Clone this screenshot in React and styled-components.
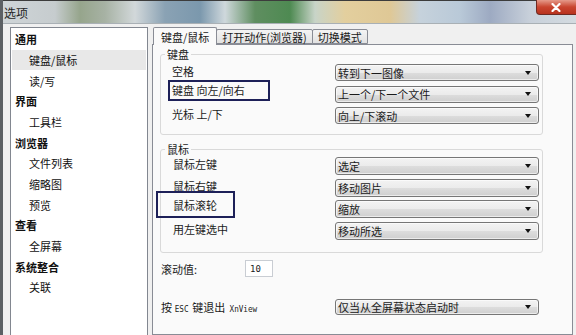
import styled, { createGlobalStyle } from "styled-components";

const Global = createGlobalStyle`
  html, body {
    margin: 0;
    padding: 0;
    background: #f0f0f0;
    overflow: hidden;
  }
  * { box-sizing: border-box; }
`;

const FONT = `"Noto Sans CJK SC", "Noto Sans", sans-serif`;

const Window = styled.div`
  width: 576px;
  height: 335px;
  display: flex;
  flex-direction: column;
  border-left: 3px solid #5c6064;
  background: #f0f0f0;
  font-family: ${FONT};
  font-size: 11px;
  color: #1a1a1a;
  overflow: hidden;
`;

const TitleBar = styled.div`
  height: 24px;
  flex-shrink: 0;
  display: flex;
  align-items: flex-start;
  margin-left: -3px;
  border-top: 1px solid #3c3c3c;
  border-bottom: 1px solid #a9b0b5;
  background: linear-gradient(
    90deg,
    #cfd5d8 0px,
    #c6ccce 55px,
    #96a58c 80px,
    #a7b2a4 105px,
    #d2d8da 135px,
    #8aa2b4 165px,
    #7b98ad 200px,
    #cfd8dc 225px,
    #5f8e60 255px,
    #4e8a52 290px,
    #c8d4c8 315px,
    #e3cf9e 345px,
    #dfc896 390px,
    #c6d2dc 420px,
    #b9c9d8 460px,
    #9daac2 490px,
    #c8d0da 530px,
    #d4dbe0 576px
  );
`;

const Title = styled.span`
  padding: 3px 0 0 4px;
  font-size: 12px;
  color: #262626;
`;

const CloseButton = styled.div`
  margin-left: auto;
  margin-top: -1px;
  margin-right: -8px;
  width: 48px;
  height: 15px;
  border: 1px solid #6e2a22;
  border-top: none;
  border-radius: 0 0 4px 4px;
  background: linear-gradient(#e59a8a, #c9452f 50%, #b8321e);
  display: flex;
  justify-content: center;
  align-items: center;
  padding-right: 8px;
`;

const Body = styled.div`
  flex: 1;
  display: flex;
  gap: 4px;
  padding: 3px 3px 0 7px;
  min-height: 0;
`;

const Tree = styled.div`
  width: 138px;
  flex-shrink: 0;
  height: 320px;
  background: #fff;
  border: 1px solid #828790;
  padding: 1px 1px 0;
`;

const TreeItem = styled.div`
  height: 20.67px;
  display: flex;
  align-items: center;
  padding-left: ${(p) => (p.$child ? 17 : 3)}px;
  font-weight: ${(p) => (p.$child ? 400 : 700)};
  background: ${(p) => (p.$selected ? "#e8e8e8" : "transparent")};
  color: #111;
`;

const TabArea = styled.div`
  flex: 1;
  display: flex;
  flex-direction: column;
`;

const TabStrip = styled.div`
  height: 17px;
  display: flex;
  align-items: flex-end;
  padding-left: 1px;
`;

const Tab = styled.div`
  height: ${(p) => (p.$active ? 18 : 15)}px;
  padding: 0 ${(p) => (p.$active ? 7 : 5)}px;
  margin-bottom: ${(p) => (p.$active ? -1 : 0)}px;
  margin-left: ${(p) => (p.$active ? 0 : -1)}px;
  display: flex;
  align-items: center;
  border: 1px solid #898c95;
  border-bottom: ${(p) => (p.$active ? "none" : "1px solid #898c95")};
  border-radius: 2px 2px 0 0;
  background: ${(p) =>
    p.$active ? "#fafafa" : "linear-gradient(#f4f4f4, #e2e2e2)"};
  position: relative;
  z-index: ${(p) => (p.$active ? 1 : 0)};
`;

const Panel = styled.div`
  flex: 1;
  border: 1px solid #898c95;
  background: #fafafa;
  padding: 3px 0 0 7px;
  display: flex;
  flex-direction: column;
`;

const Group = styled.fieldset`
  width: 383px;
  margin: ${(p) => p.$margin || "0"};
  border: 1px solid #d9d9d9;
  border-radius: 3px;
  padding: ${(p) => p.$padding};
  display: grid;
  grid-template-columns: 1fr 204px;
  row-gap: ${(p) => p.$gap}px;
  align-items: center;
`;

const Legend = styled.legend`
  padding: 0 2px;
  margin-left: 4px;
  font-size: 11px;
  line-height: 13px;
`;

/* label cell; $box draws the dark annotation rectangle over it */
const Label = styled.div`
  position: relative;
  height: ${(p) => p.$h || 17}px;
  display: flex;
  align-items: center;
  padding-left: ${(p) => p.$indent}px;
  padding-bottom: ${(p) => (p.$box ? 8 : 4)}px;
  white-space: pre;

  ${(p) =>
    p.$box &&
    `
    &::before {
      content: "";
      position: absolute;
      left: ${p.$box.x}px;
      top: ${p.$box.y}px;
      width: ${p.$box.w}px;
      height: ${p.$box.h}px;
      border: 2px solid #1d2058;
      box-sizing: border-box;
      pointer-events: none;
    }
  `}
`;

const Select = styled.div`
  width: ${(p) => p.$w || 204}px;
  height: ${(p) => p.$h || 17}px;
  margin-left: ${(p) => (p.$push ? "auto" : "0")};
  margin-right: ${(p) => p.$right || 0}px;
  border: 1px solid #767676;
  border-radius: 3px;
  background: linear-gradient(#f3f3f3 0%, #ebebeb 50%, #dddddd 51%, #cfcfcf 100%);
  display: flex;
  align-items: center;
  justify-content: space-between;
  padding: 0 7px 0 2px;
  box-shadow: inset 0 0 0 1px rgba(255, 255, 255, 0.6);
`;

const Arrow = styled.span`
  width: 0;
  height: 0;
  border-left: 3.5px solid transparent;
  border-right: 3.5px solid transparent;
  border-top: 4px solid #111;
`;

const FieldRow = styled.div`
  display: flex;
  align-items: center;
  margin-top: ${(p) => p.$top}px;
  padding-left: 1px;
`;

const Input = styled.div`
  width: 28px;
  height: 17px;
  margin-left: ${(p) => p.$left}px;
  background: #fff;
  border: 1px solid #c9cdd3;
  display: flex;
  align-items: center;
  padding-left: 4px;
  font-family: "DejaVu Sans Mono", monospace;
  font-size: 9px;
`;

const Mono = styled.span`
  font-family: "DejaVu Sans Mono", monospace;
  font-size: 8.5px;
  transform: scaleX(0.9);
  display: inline-block;
`;

const Dropdown = ({ text, w, h, push, right }) => (
  <Select $w={w} $h={h} $push={push} $right={right}>
    <span>{text}</span>
    <Arrow />
  </Select>
);

const treeItems = [
  ["通用"],
  ["键盘/鼠标", true, true],
  ["读/写", true],
  ["界面"],
  ["工具栏", true],
  ["浏览器"],
  ["文件列表", true],
  ["缩略图", true],
  ["预览", true],
  ["查看"],
  ["全屏幕", true],
  ["系统整合"],
  ["关联", true],
];

export default function App() {
  return (
    <>
      <Global />
      <Window>
        <TitleBar>
          <Title>选项</Title>
          <CloseButton>
            <svg width="10" height="9" viewBox="0 0 10 9">
              <path d="M1.5 1 L8.5 8 M8.5 1 L1.5 8" stroke="#fff" strokeWidth="2.2" strokeLinecap="round" />
            </svg>
          </CloseButton>
        </TitleBar>
        <Body>
          <Tree>
            {treeItems.map(([label, child, selected]) => (
              <TreeItem key={label} $child={child} $selected={selected}>
                {label}
              </TreeItem>
            ))}
          </Tree>
          <TabArea>
            <TabStrip>
              <Tab $active>键盘/鼠标</Tab>
              <Tab>打开动作(浏览器)</Tab>
              <Tab>切换模式</Tab>
            </TabStrip>
            <Panel>
              <Group $padding="3px 3px 10px 0" $gap={4.5}>
                <Legend>键盘</Legend>
                <Label $indent={11}>空格</Label>
                <Dropdown text="转到下一图像" />
                <Label $indent={11} $box={{ x: 7, y: -6, w: 102, h: 21 }}>
                  键盘 向左/向右
                </Label>
                <Dropdown text="上一个/下一个文件" />
                <Label $indent={11}>光标 上/下</Label>
                <Dropdown text="向上/下滚动" />
              </Group>
              <Group $margin="8px 0 0" $padding="1px 3px 12px 0" $gap={3.7}>
                <Legend>鼠标</Legend>
                <Label $indent={12} $h={18}>鼠标左键</Label>
                <Dropdown text="选定" h={18} />
                <Label $indent={12} $h={18}>鼠标右键</Label>
                <Dropdown text="移动图片" h={18} />
                <Label $indent={12} $h={18} $box={{ x: -5, y: -9, w: 79, h: 27 }}>
                  鼠标滚轮
                </Label>
                <Dropdown text="缩放" h={18} />
                <Label $indent={12} $h={18}>用左键选中</Label>
                <Dropdown text="移动所选" h={18} />
              </Group>
              <FieldRow $top={7}>
                <span>滚动值:</span>
                <Input $left={48}>10</Input>
              </FieldRow>
              <FieldRow $top={22}>
                <span>
                  按 <Mono>ESC</Mono> 键退出 <Mono>XnView</Mono>
                </span>
                <Dropdown text="仅当从全屏幕状态启动时" h={16} push right={33} />
              </FieldRow>
            </Panel>
          </TabArea>
        </Body>
      </Window>
    </>
  );
}
